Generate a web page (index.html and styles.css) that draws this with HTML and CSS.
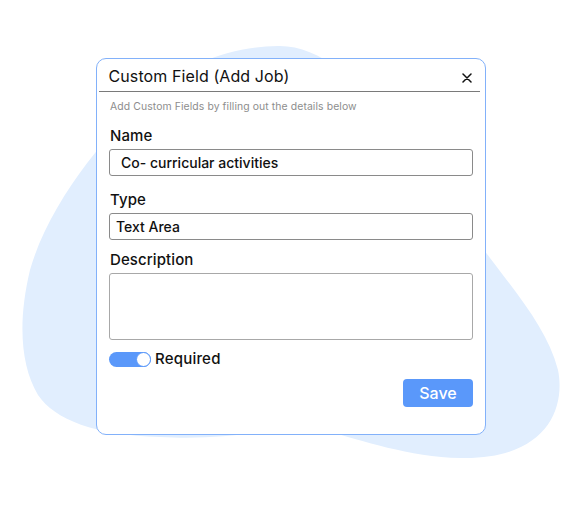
FILE: index.html
```html
<!DOCTYPE html>
<html lang="en">
<head>
<meta charset="utf-8">
<title>Custom Field</title>
<link rel="stylesheet" href="styles.css">
</head>
<body>
<div class="stage">
  <svg class="blob" width="581" height="505" viewBox="0 0 581 505" aria-hidden="true">
    <path d="M278 46 C360 44 440 190 490 258 C522 300 548 332 558 370 C566 410 545 460 460 458 C410 457 360 440 330 432 L300 430 C250 432 220 440 160 437 C95 435 55 420 38 395 C20 365 18 320 30 270 C50 200 110 130 150 95 C190 62 230 47 278 46 Z" fill="#e1eefe"/>
  </svg>
  <div class="card">
    <div class="card-header">
      <h1 class="card-title">Custom Field (Add Job)</h1>
      <svg class="close" width="10" height="10" viewBox="0 0 10 10" aria-hidden="true">
        <path d="M1 1 L9 9 M9 1 L1 9" stroke="#111" stroke-width="1.5" stroke-linecap="round"/>
      </svg>
    </div>
    <div class="card-body">
      <p class="hint">Add Custom Fields by filling out the details below</p>
      <div class="label label-name">Name</div>
      <div class="field field-name">Co- curricular activities</div>
      <div class="label label-type">Type</div>
      <div class="field field-type">Text Area</div>
      <div class="label label-desc">Description</div>
      <div class="textarea"></div>
      <div class="toggle-row">
        <span class="toggle"><span class="knob"></span></span>
        <span class="toggle-label">Required</span>
      </div>
      <div class="actions">
        <button class="save">Save</button>
      </div>
    </div>
  </div>
</div>
</body>
</html>
```

FILE: styles.css
```css
* { box-sizing: border-box; }
html, body {
  margin: 0;
  padding: 0;
  background: #ffffff;
}
body {
  font-family: "Inter", "Noto Sans", sans-serif;
  color: #111;
}
.stage {
  position: relative;
  width: 581px;
  height: 505px;
  padding: 58px 0 0 96px;
  overflow: hidden;
}
.blob {
  position: absolute;
  left: 0;
  top: 0;
  z-index: 0;
}
.card {
  position: relative;
  z-index: 1;
  width: 390px;
  height: 377px;
  background: #fff;
  border: 1.5px solid #82b1fa;
  border-radius: 10px;
  display: flex;
  flex-direction: column;
}
.card-header {
  margin: 0 5px 0 1.5px;
  height: 33px;
  border-bottom: 1px solid #7a7a7a;
  display: flex;
  align-items: center;
  justify-content: space-between;
  padding: 2px 8px 0 10px;
}
.card-title {
  margin: 0;
  font-size: 16px;
  font-weight: 400;
  line-height: 20px;
  letter-spacing: 0.1px;
}
.close { display: block; margin-top: 3px; }
.card-body {
  padding: 0 12px 0 12px;
  display: flex;
  flex-direction: column;
}
.hint {
  margin: 8px 0 0 1px;
  font-size: 10.4px;
  line-height: 14px;
  letter-spacing: 0.1px;
  color: #8d8d8d;
}
.label {
  font-size: 15px;
  line-height: 20px;
  font-weight: 500;
  padding-left: 1px;
  letter-spacing: 0.1px;
}
.label-name { margin-top: 12px; }
.label-type { margin-top: 14px; }
.label-desc { margin-top: 10px; }
.field {
  margin-top: 3px;
  height: 27px;
  border: 1px solid #8a8a8a;
  border-radius: 3px;
  font-size: 14px;
  font-weight: 500;
  line-height: 25px;
}
.field-name { padding-left: 11px; }
.field-type { padding-left: 6px; }
.textarea {
  margin-top: 3px;
  height: 67px;
  border: 1.5px solid #a8a8a8;
  border-radius: 3px;
}
.toggle-row {
  margin-top: 9px;
  height: 20px;
  display: flex;
  align-items: center;
  gap: 4px;
}
.toggle {
  position: relative;
  width: 42px;
  height: 15px;
  border-radius: 8px;
  background: #5a98fa;
  display: inline-block;
}
.knob {
  position: absolute;
  right: 0;
  top: 0;
  width: 15px;
  height: 15px;
  border-radius: 50%;
  background: #fff;
  border: 1.5px solid #5a98fa;
}
.toggle-label {
  font-size: 15px;
  font-weight: 500;
  line-height: 20px;
  letter-spacing: 0.2px;
}
.actions {
  margin-top: 10px;
  display: flex;
  justify-content: flex-end;
}
.save {
  width: 70px;
  height: 28px;
  border: none;
  border-radius: 4px;
  background: #5a98fa;
  color: #fff;
  font-family: inherit;
  font-size: 16px;
  font-weight: 500;
  padding: 0;
}
```
